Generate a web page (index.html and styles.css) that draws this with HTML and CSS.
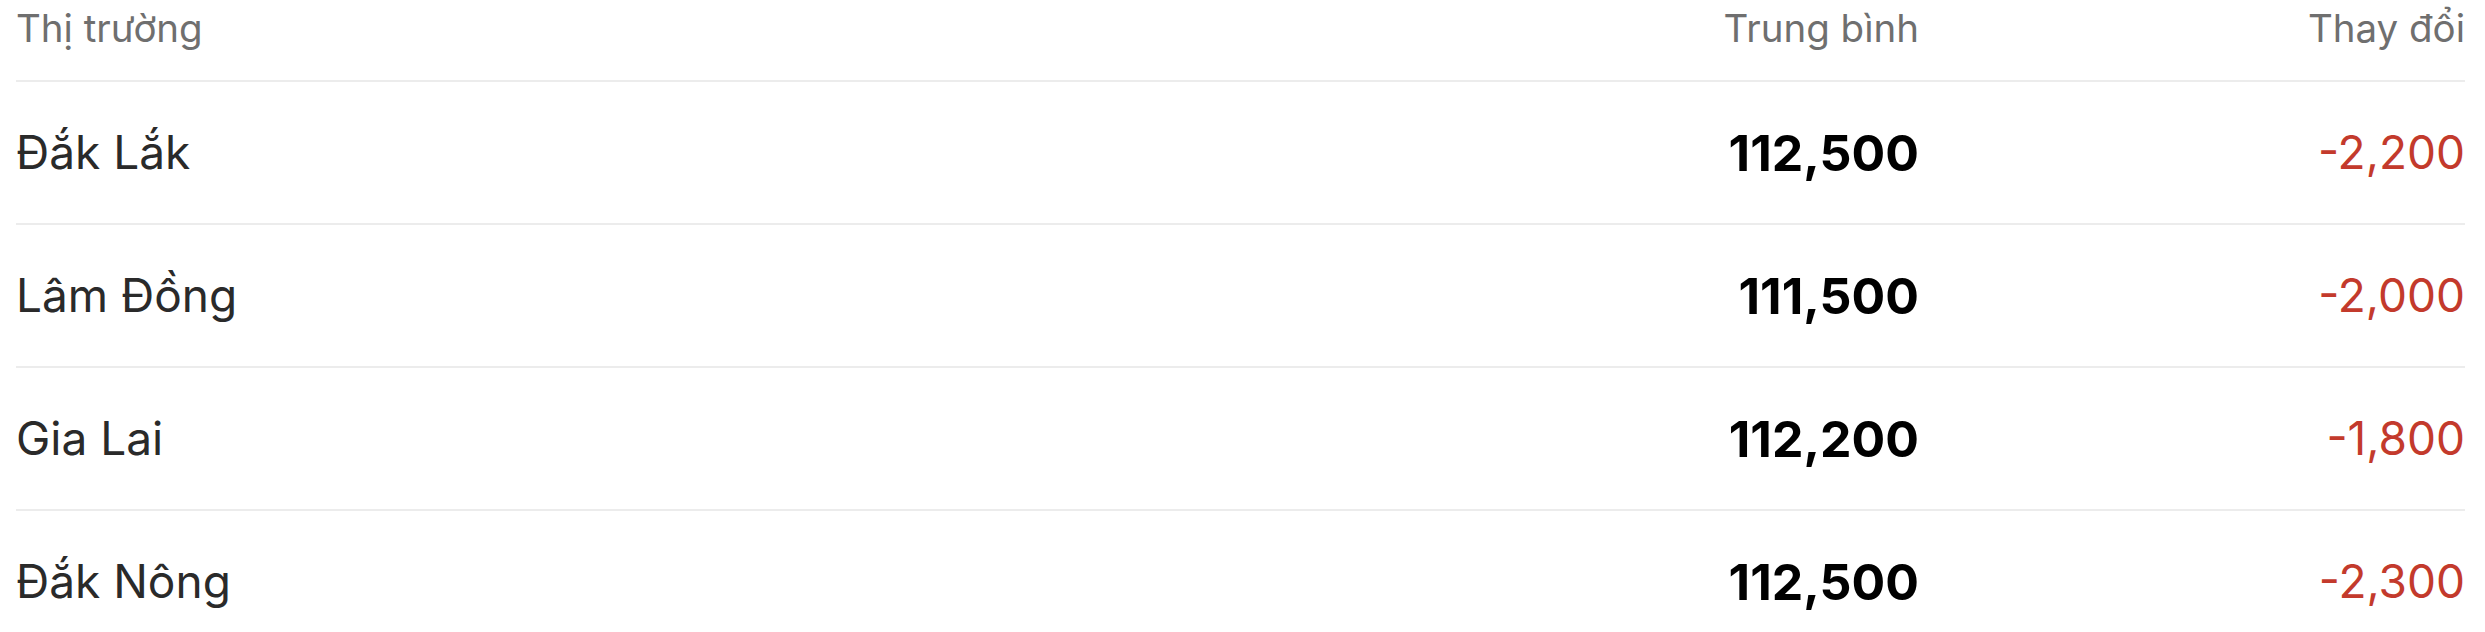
FILE: index.html
```html
<!DOCTYPE html>
<html lang="vi">
<head>
<meta charset="utf-8">
<title>Giá cà phê</title>
<link rel="stylesheet" href="styles.css">
</head>
<body>
<div class="table">
  <div class="row head">
    <div class="cell name">Thị trường</div>
    <div class="cell avg">Trung bình</div>
    <div class="cell chg">Thay đổi</div>
  </div>
  <div class="row">
    <div class="cell name">Đắk Lắk</div>
    <div class="cell avg">112,500</div>
    <div class="cell chg">-2,200</div>
  </div>
  <div class="row">
    <div class="cell name">Lâm Đồng</div>
    <div class="cell avg">111,500</div>
    <div class="cell chg">-2,000</div>
  </div>
  <div class="row">
    <div class="cell name">Gia Lai</div>
    <div class="cell avg">112,200</div>
    <div class="cell chg">-1,800</div>
  </div>
  <div class="row">
    <div class="cell name">Đắk Nông</div>
    <div class="cell avg">112,500</div>
    <div class="cell chg">-2,300</div>
  </div>
</div>
</body>
</html>
```

FILE: styles.css
```css
html, body {
  margin: 0;
  padding: 0;
  background: #ffffff;
}

body {
  font-family: Inter, "Noto Sans", "Liberation Sans", sans-serif;
  overflow: hidden;
}

.table {
  padding: 0 20px 0 16px;
}

.row {
  display: grid;
  grid-template-columns: 1fr 560px 546px;
  align-items: center;
  height: 141px;
  border-bottom: 2px solid #ececec;
}

.row.head {
  height: 80px;
  align-items: start;
}

.cell {
  line-height: 1.2;
}

.head .cell {
  font-size: 38.5px;
  line-height: 54px;
  color: #6f6f6f;
  padding-top: 1px;
}

.name {
  text-align: left;
  font-size: 46px;
  color: #2a2a2a;
}

.avg {
  text-align: right;
  font-size: 50px;
  font-weight: 700;
  color: #000000;
}

.chg {
  text-align: right;
  font-size: 46px;
  color: #c33a2c;
}

.head .name,
.head .avg,
.head .chg {
  font-weight: 400;
}
```
